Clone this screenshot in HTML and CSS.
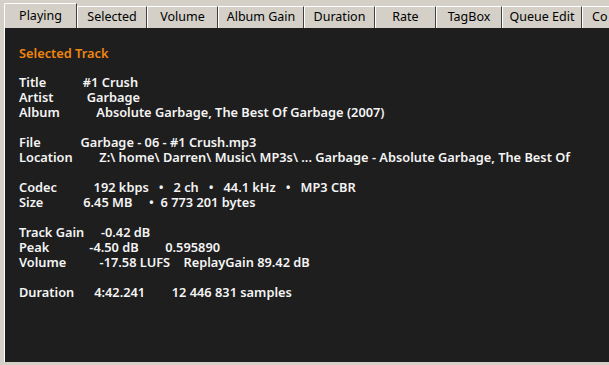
FILE: index.html
```html
<!DOCTYPE html>
<html lang="en">
<head>
    <meta charset="UTF-8">
    <title>Playing</title>
    <link rel="stylesheet" href="styles.css">
</head>
<body>
    <div class="window">
        <div class="tabs">
            <div class="tab active">Playing</div>
            <div class="tab w-selected">Selected</div>
            <div class="tab w-volume">Volume</div>
            <div class="tab w-album">Album Gain</div>
            <div class="tab w-duration">Duration</div>
            <div class="tab w-rate">Rate</div>
            <div class="tab w-tagbox">TagBox</div>
            <div class="tab w-queue">Queue Edit</div>
            <div class="tab w-more">Co</div>
        </div>

        <div class="panel">
            <div class="heading">Selected Track</div>
<pre class="info">Title           #1 Crush
Artist          Garbage
Album           Absolute Garbage, The Best Of Garbage (2007)

File            Garbage - 06 - #1 Crush.mp3
Location        Z:\ home\ Darren\ Music\ MP3s\ ... Garbage - Absolute Garbage, The Best Of

Codec           192 kbps   •   2 ch   •   44.1 kHz   •   MP3 CBR
Size            6.45 MB     •  6 773 201 bytes

Track Gain     -0.42 dB
Peak            -4.50 dB        0.595890
Volume          -17.58 LUFS    ReplayGain 89.42 dB

Duration      4:42.241        12 446 831 samples</pre>
        </div>
    </div>
</body>
</html>
```

FILE: styles.css
```css
body {
    margin: 0;
    background-color: #d4d0c8;
    font-family: "Noto Sans", "Open Sans", sans-serif;
    font-size: 12px;
    width: 609px;
    height: 365px;
    overflow: hidden;
}

.window {
    padding: 3px 0 0 4px;
}

.tabs {
    display: flex;
    align-items: flex-end;
    height: 25px;
}

.tab {
    box-sizing: border-box;
    height: 22px;
    line-height: 20px;
    font-size: 12.5px;
    text-align: center;
    color: #000;
    background-color: #d4d0c8;
    border-top: 1px solid #fff;
    border-left: 1px solid #fff;
    border-right: 1px solid #404040;
    flex-shrink: 0;
    width: 70px;
}

.tab.active {
    width: 73px;
    height: 25px;
    line-height: 24px;
    border-top-left-radius: 2px;
}

.w-selected { width: 70px; }
.w-volume { width: 71px; }
.w-album { width: 86px; }
.w-duration { width: 71px; }
.w-rate { width: 61px; }
.w-tagbox { width: 66px; }
.w-queue { width: 80px; }
.w-more { width: 40px; text-align: left; padding-left: 9px; }

.panel {
    background-color: #1e1e1e;
    height: 334px;
    border-left: 1px solid #fff;
    padding: 15px 15px 0 14px;
    box-sizing: border-box;
}

.heading {
    color: #f0860f;
    font-size: 12.8px;
    font-weight: 600;
    line-height: 20px;
    margin-bottom: 12px;
}

.info {
    margin: 0;
    font-family: inherit;
    font-size: 12.8px;
    color: #f4f4f4;
    font-weight: 600;
    line-height: 15px;
    white-space: pre;
}
```
